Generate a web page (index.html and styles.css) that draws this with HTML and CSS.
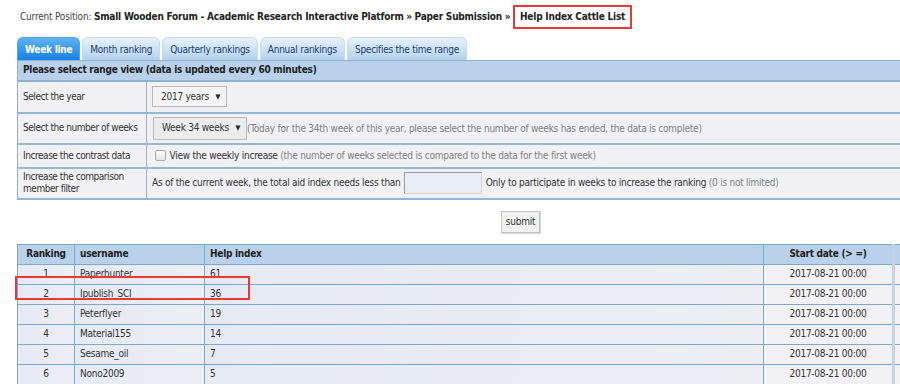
FILE: index.html
```html
<!DOCTYPE html>
<html>
<head>
<meta charset="utf-8">
<link rel="stylesheet" href="styles.css">
</head>
<body>
<div class="page">
  <div class="crumb">
    Current Position: <b>Small Wooden Forum - Academic Research Interactive Platform</b> <b>&raquo;</b> <b>Paper Submission</b> <b>&raquo;</b> <b class="mark">Help Index Cattle List</b>
  </div>

  <ul class="tabs">
    <li class="tab active">Week line</li>
    <li class="tab">Month ranking</li>
    <li class="tab">Quarterly rankings</li>
    <li class="tab">Annual rankings</li>
    <li class="tab">Specifies the time range</li>
  </ul>

  <table class="filter">
    <tr class="head"><th colspan="2">Please select range view (data is updated every 60 minutes)</th></tr>
    <tr class="r-year">
      <td class="lbl">Select the year</td>
      <td><span class="sel sel-year"><select><option>2017 years</option></select></span></td>
    </tr>
    <tr class="r-week">
      <td class="lbl">Select the number of weeks</td>
      <td><span class="sel sel-week"><select><option>Week 34 weeks</option></select></span><span class="tip">(Today for the 34th week of this year, please select the number of weeks has ended, the data is complete)</span></td>
    </tr>
    <tr class="r-cmp">
      <td class="lbl">Increase the contrast data</td>
      <td><label class="chk"><input type="checkbox"> View the weekly increase</label> <span class="tip">(the number of weeks selected is compared to the data for the first week)</span></td>
    </tr>
    <tr class="r-flt">
      <td class="lbl">Increase the comparison member filter</td>
      <td>As of the current week, the total aid index needs less than <input class="num" type="text"> Only to participate in weeks to increase the ranking <span class="tip">(0 is not limited)</span></td>
    </tr>
  </table>

  <div class="actions"><button class="btn">submit</button></div>

  <div class="rank-wrap">
    <table class="rank">
      <thead>
        <tr>
          <th class="c-no">Ranking</th>
          <th class="c-user">username</th>
          <th class="c-idx">Help index</th>
          <th class="c-date">Start date (&gt; =)</th>
          <th class="c-end"></th>
        </tr>
      </thead>
      <tbody>
        <tr><td class="c-no">1</td><td class="c-user">Paperhunter</td><td class="c-idx">61</td><td class="c-date">2017-08-21 00:00</td><td class="c-end"></td></tr>
        <tr><td class="c-no">2</td><td class="c-user">Ipublish_SCI</td><td class="c-idx">36</td><td class="c-date">2017-08-21 00:00</td><td class="c-end"></td></tr>
        <tr><td class="c-no">3</td><td class="c-user">Peterflyer</td><td class="c-idx">19</td><td class="c-date">2017-08-21 00:00</td><td class="c-end"></td></tr>
        <tr><td class="c-no">4</td><td class="c-user">Material155</td><td class="c-idx">14</td><td class="c-date">2017-08-21 00:00</td><td class="c-end"></td></tr>
        <tr><td class="c-no">5</td><td class="c-user">Sesame_oil</td><td class="c-idx">7</td><td class="c-date">2017-08-21 00:00</td><td class="c-end"></td></tr>
        <tr><td class="c-no">6</td><td class="c-user">Nono2009</td><td class="c-idx">5</td><td class="c-date">2017-08-21 00:00</td><td class="c-end"></td></tr>
      </tbody>
    </table>
    <div class="row-mark"></div>
  </div>
</div>
</body>
</html>
```

FILE: styles.css
```css
*, *:before, *:after {
  box-sizing: border-box;
}

html, body {
  margin: 0;
  overflow: hidden;
}

body {
  background: #fff;
  color: #333;
  font: 10px/1.2 "DejaVu Sans Condensed", "DejaVu Sans", sans-serif;
  letter-spacing: -0.25px;
}

.page {
  width: 1007px;
  margin-left: 17px;
}

/* breadcrumb */
.crumb {
  height: 37px;
  padding: 5px 0 0 3px;
  color: #444;
  font-size: 10px;
  letter-spacing: -0.2px;
  line-height: 24px;
  white-space: nowrap;
}
.crumb b {
  color: #222;
}
.crumb .mark {
  display: inline-block;
  height: 24px;
  padding: 0 5px;
  line-height: 20px;
  border: 2px solid #e8393a;
}

/* tabs */
.tabs {
  display: flex;
  gap: 2px;
  margin: 0;
  padding: 0;
  list-style: none;
}
.tab {
  height: 23px;
  padding: 0 7px;
  line-height: 24px;
  color: #1d3c6e;
  border: 1px solid #c4dcef;
  border-bottom: 0;
  border-radius: 6px 6px 0 0;
  background: linear-gradient(#e7f2fb, #b3d2ec);
  white-space: nowrap;
}
.tab.active {
  color: #fff;
  font-weight: bold;
  border-color: #4da3ec;
  background: linear-gradient(#5fb2f3, #1580e3);
}

/* filter form */
.filter {
  width: 100%;
  border-collapse: collapse;
  border: 1px solid #8db3d3;
  background: #f1f1f4;
}
.filter th {
  height: 20px;
  padding: 0 5px;
  text-align: left;
  color: #222;
  background: #b9d1ea;
  border-bottom: 2px solid #8db3d3;
  border-top: 1px solid #8db3d3;
}
.filter td {
  padding: 0 5px;
  border-bottom: 2px solid #93b7d5;
  color: #333;
  white-space: nowrap;
}
.filter td.lbl {
  width: 129px;
  padding: 0 2px 0 5px;
  border-right: 1px solid #93b7d5;
  white-space: normal;
  letter-spacing: -0.45px;
  line-height: 12px;
}
.filter .r-year td { height: 32px; }
.filter .r-week td { height: 31px; }
.filter .r-cmp td { height: 24px; }
.filter .r-flt td { height: 31px; }

.tip {
  color: #808080;
}

.sel {
  position: relative;
  display: inline-block;
  vertical-align: middle;
}
.sel select {
  appearance: none;
  -webkit-appearance: none;
  margin: 0;
  padding: 0 0 0 8px;
  font: inherit;
  letter-spacing: inherit;
  color: #333;
  background: #f4f4f4;
  border: 1px solid #b9b9b9;
  border-radius: 0;
}
.sel:after {
  content: "\25BC";
  position: absolute;
  top: 50%;
  right: 7px;
  margin-top: -5px;
  font-size: 7px;
  line-height: 10px;
  color: #222;
}
.sel-year select {
  width: 75px;
  height: 21px;
}
.sel-week {
  margin-left: 1px;
}
.sel-week select {
  width: 94px;
  height: 23px;
  background: #ececec;
}

.chk input {
  appearance: none;
  -webkit-appearance: none;
  width: 11px;
  height: 11px;
  margin: 0 1px 0 3px;
  vertical-align: -2px;
  border: 1px solid #a9a9a9;
  border-radius: 2px;
  background: linear-gradient(#fafafa, #e6e6e6);
}

.num {
  width: 78px;
  height: 22px;
  margin: 0 1px;
  padding: 0;
  vertical-align: middle;
  background: #e9edf5;
  border: 1px solid;
  border-color: #9a9a9a #d6d6d6 #d6d6d6 #9a9a9a;
}

/* submit */
.actions {
  display: flex;
  justify-content: center;
  padding: 11px 0 11px;
}
.btn {
  height: 22px;
  padding: 0 4px;
  font: inherit;
  letter-spacing: inherit;
  color: #333;
  background: #f1f1f1;
  border: 1px solid #c3c3c3;
  box-shadow: 1px 1px 0 #d6d6d6;
}

/* ranking table */
.rank-wrap {
  position: relative;
}
.rank {
  width: 100%;
  border-collapse: collapse;
  border: 1px solid #7ea8c9;
  table-layout: fixed;
}
.rank th,
.rank td {
  height: 20px;
  padding: 0 5px;
  border: 1px solid #7ea8c9;
  white-space: nowrap;
  overflow: hidden;
}
.rank th {
  color: #222;
  text-align: left;
  background: #b9d1ea;
}
.rank td {
  color: #333;
  background: linear-gradient(90deg, #e6eaf3, #eceef4);
}
.rank .c-no { width: 57px; text-align: center; }
.rank .c-user { width: 130px; }
.rank .c-date,
.rank .c-end { width: 130px; text-align: center; }
.rank td.c-date,
.rank td.c-end { background: #f2f2f4; }
.rank .c-end { border-left: 3px solid #c3d3e3; }

.row-mark {
  position: absolute;
  left: -2px;
  top: 32px;
  width: 235px;
  height: 24px;
  border: 2px solid #e8393a;
}
```
